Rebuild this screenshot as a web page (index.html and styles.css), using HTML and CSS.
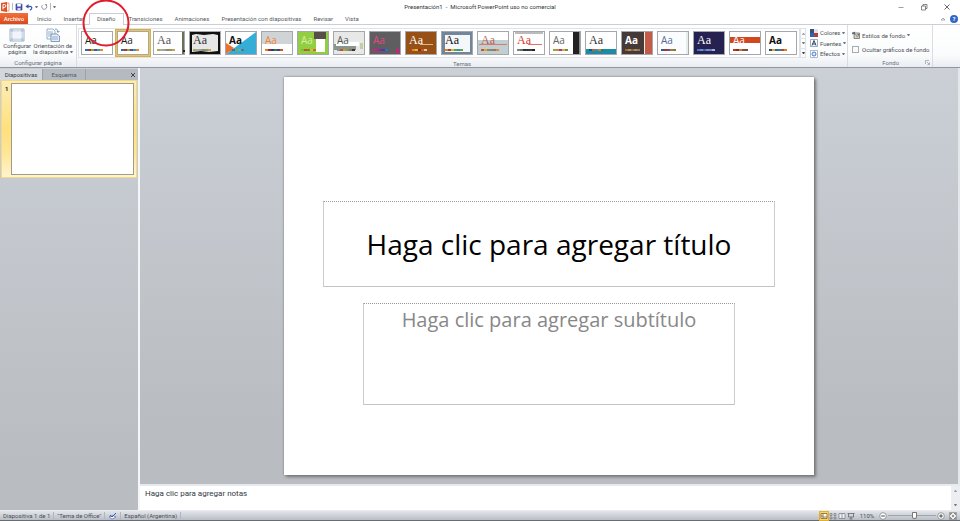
FILE: index.html
```html
<!DOCTYPE html>
<html lang="es">
<head>
<meta charset="utf-8">
<title>Presentación1 - Microsoft PowerPoint uso no comercial</title>
<link rel="stylesheet" href="styles.css">
</head>
<body>
<header class="titlebar">
  <div class="quick">
    <svg class="logo" viewBox="0 0 10 10" aria-hidden="true"><path d="M1 1l6-1v10l-6-1z" fill="#df5326"/><path d="M7 1h2v8H7" fill="#fff" stroke="#dc7550" stroke-width=".7"/><path d="M3 7.500V2.500h1.400a1.400 1.400 0 0 1 0 2.900H3" fill="none" stroke="#fff"/></svg>
    <i class="vline"></i>
    <button aria-label="Guardar"><svg viewBox="0 0 8 8"><path d="M1 1h5.500l.5.500V7H1z" fill="#4f55b4" stroke="#343c98" stroke-width=".7"/><path d="M2.200 1h3.600v2.500H2.200z" fill="#fff"/><path d="M2.500 5h3v2h-3z" fill="#d3d9f3"/></svg></button>
    <button aria-label="Deshacer"><svg viewBox="0 0 8 8"><path d="M1.500 3.500h3c3-.5 3 3 .3 3.500" fill="none" stroke="#3759b4" stroke-width="1.300"/><path d="M.5 3.600L3.500 1v4.500z" fill="#3759b4"/></svg></button>
    <span class="caret"></span>
    <button aria-label="Repetir"><svg viewBox="0 0 8 8"><path d="M2.500 2a2.500 2.500 0 1 0 3.500 0" fill="none" stroke="#949ba6"/><path d="M4.500 1H7v2.500z" fill="#949ba6"/></svg></button>
    <i class="vline"></i>
    <span class="caret"></span>
  </div>
  <h1>Presentación1&nbsp; -&nbsp; Microsoft PowerPoint uso no comercial</h1>
  <div class="window-buttons">
    <button aria-label="Minimizar"><svg viewBox="0 0 8 8"><path d="M1.500 4.500h5" stroke="#888" stroke-width=".8"/></svg></button>
    <button aria-label="Restaurar"><svg viewBox="0 0 8 8"><path d="M1.500 3h4v4h-4zM3 3V1.500h4v4H5.500" fill="none" stroke="#555" stroke-width=".7"/></svg></button>
    <button aria-label="Cerrar"><svg viewBox="0 0 8 8"><path d="M1.500 1.500l5 5m0-5l-5 5" stroke="#444" stroke-width=".8"/></svg></button>
  </div>
</header>
<nav class="tabs">
  <a class="file" href="#">Archivo</a>
  <a href="#">Inicio</a>
  <a href="#">Insertar</a>
  <a class="active" href="#">Diseño</a>
  <a href="#">Transiciones</a>
  <a href="#">Animaciones</a>
  <a href="#">Presentación con diapositivas</a>
  <a href="#">Revisar</a>
  <a href="#">Vista</a>
  <span class="help">
    <svg viewBox="0 0 6 6" aria-hidden="true"><path d="M1 4l2-2 2 2z" fill="#fff" stroke="#858c96" stroke-width=".7"/></svg>
    <button aria-label="Ayuda">?</button>
  </span>
</nav>
<section class="ribbon">
  <div class="group page-setup">
    <div class="body">
      <button class="big"><svg viewBox="0 0 16 16"><path d="M1 2h14v12H1z" fill="#fff" stroke="#8b9eb7" stroke-width=".8"/><path d="M1.500 4h13M1.500 12h13M3 2v12M13 2v12" stroke="#8aa6cb" stroke-width=".8"/><path d="M3.500 4.500h9v7h-9z" fill="#f1f4fa"/></svg><span>Configurar<br>página</span></button>
      <button class="big"><svg viewBox="0 0 16 16"><path d="M2 2h6l2 2v8H2z" fill="#fff" stroke="#7899c2" stroke-width=".8"/><path d="M3 5h5M3 7h5M3 9h5" stroke="#7899c2" stroke-width=".8"/><path d="M6 7h6l2.500 2v5.500H6z" fill="#e7edf6" stroke="#6485ae" stroke-width=".8"/><path d="M7 10h6M7 12h6" stroke="#819fc5" stroke-width=".8"/><path d="M10 2c2 0 3 1 3 3m-1-1l1 1.500L14.500 4" fill="none" stroke="#477bb5" stroke-width=".8"/></svg><span>Orientación de<br>la diapositiva <i class="caret"></i></span></button>
    </div>
    <h2>Configurar página</h2>
  </div>
  <div class="group themes">
    <div class="body">
      <div class="gallery" id="gallery"></div>
      <div class="scroller"><button aria-label="Fila anterior"><i class="caret up"></i></button><button aria-label="Fila siguiente"><i class="caret"></i></button><button aria-label="Más temas"><i class="caret more"></i></button></div>
      <div class="stack">
        <button><svg viewBox="0 0 8 8"><path d="M0 0h4v4H0z" fill="#394f7a"/><path d="M4 0h4v4H4z" fill="#dfe4ec"/><path d="M0 4h4v4H0z" fill="#2d64b2"/><path d="M4 4h4v4H4z" fill="#b43d38"/></svg>Colores <i class="caret"></i></button>
        <button><svg viewBox="0 0 8 8"><path d="M.5.5h7v7h-7z" fill="#fff" stroke="#6e87aa" stroke-width=".7"/><path d="M2 6.500L4 1.500l2 5M2.700 5h2.600" fill="none" stroke="#273f68"/></svg>Fuentes <i class="caret"></i></button>
        <button><svg viewBox="0 0 8 8"><path d="M.5.5h7v7h-7z" fill="#fff" stroke="#8c9db6" stroke-width=".7"/><circle cx="4" cy="4" r="2" fill="#dfeaff" stroke="#4a78c4"/></svg>Efectos <i class="caret"></i></button>
      </div>
    </div>
    <h2>Temas</h2>
  </div>
  <div class="group background">
    <div class="body">
      <button class="styles"><svg viewBox="0 0 8 8"><path d="M2 2h5.500v5.500H2z" fill="#cfd4d9" stroke="#555f6c" stroke-width=".7"/><path d="M.5 1l3 3M0 3l3-2" stroke="#40516b"/><path d="M3 3l4 2-2 2z" fill="#d1a33b"/><path d="M5 3h2v2z" fill="#4c73ae"/></svg>Estilos de fondo <i class="caret"></i></button>
      <label><input type="checkbox"> Ocultar gráficos de fondo</label>
    </div>
    <h2>Fondo</h2>
    <button class="launcher" aria-label="Formato del fondo"><svg viewBox="0 0 5 5"><path d="M.5 4V.5H4M2 2l2 2M4.500 2.500v2h-2" fill="none" stroke="#818790" stroke-width=".6"/></svg></button>
  </div>
</section>
<main class="workspace">
  <aside class="outline">
    <div class="pane-tabs"><button class="on">Diapositivas</button><button>Esquema</button><button class="close" aria-label="Cerrar"><svg viewBox="0 0 6 6"><path d="M1 1l4 4m0-4L1 5" stroke="#33373c" stroke-width=".9"/></svg></button></div>
    <div class="thumb"><b>1</b><div class="mini"></div></div>
  </aside>
  <section class="editor">
    <div class="stage">
      <article class="slide">
        <div class="ph title">Haga clic para agregar título</div>
        <div class="ph subtitle">Haga clic para agregar subtítulo</div>
      </article>
    </div>
    <div class="notes"><p>Haga clic para agregar notas</p><div class="notes-scroll"><i class="caret up"></i><i class="caret"></i></div></div>
  </section>
</main>
<footer class="status">
  <span>Diapositiva 1 de 1</span><span>"Tema de Office"</span>
  <span class="lang"><svg viewBox="0 0 9 8" aria-hidden="true"><path d="M1 5l4-1.500L8 5 4 7z" fill="#fff" stroke="#5b78bd" stroke-width=".8"/><path d="M2 3l2 2 4-4" fill="none" stroke="#3558b9"/></svg></span>
  <span>Español (Argentina)</span>
  <div class="views">
    <button class="on" aria-label="Normal"><svg viewBox="0 0 8 8"><path d="M1 1.500h6v5H1zM3 1.500v5M1 4h2M3 5h4" fill="#fff" stroke="#7c6630" stroke-width=".8"/></svg></button>
    <button aria-label="Clasificador"><svg viewBox="0 0 8 8"><path d="M1 1.500h2v2H1zM5 1.500h2v2H5zM1 5h2v2H1zM5 5h2v2H5z" fill="none" stroke="#737982" stroke-width=".7"/></svg></button>
    <button aria-label="Lectura"><svg viewBox="0 0 8 8"><path d="M1 1.500h6v5H1zM4 1.500v5" fill="#eee" stroke="#737982" stroke-width=".7"/></svg></button>
    <button aria-label="Presentación"><svg viewBox="0 0 8 8"><path d="M.5 1.500h7M1.500 1.500V5h5V1.500M4 5v2M2.500 7h3" fill="none" stroke="#62676f" stroke-width=".8"/></svg></button>
    <span class="zoom">110%</span>
    <button aria-label="Alejar"><svg viewBox="0 0 8 8"><circle cx="4" cy="4" r="3.300" fill="#fff" stroke="#757b83" stroke-width=".7"/><path d="M2.200 4h3.600" stroke="#444"/></svg></button>
    <input type="range" aria-label="Zoom" min="10" max="200" value="115">
    <button aria-label="Acercar"><svg viewBox="0 0 8 8"><circle cx="4" cy="4" r="3.300" fill="#fff" stroke="#757b83" stroke-width=".7"/><path d="M2.200 4h3.600M4 2.200v3.600" stroke="#444"/></svg></button>
    <button class="fit" aria-label="Ajustar"><svg viewBox="0 0 8 8"><path d="M.5.5h7v7h-7z" fill="#eee" stroke="#777" stroke-width=".6"/><path d="M1.500 3V1.500H3M5 1.500h1.500V3M6.500 5v1.500H5M3 6.500H1.500V5M3 4h2M4 3v2" fill="none" stroke="#555" stroke-width=".7"/></svg></button>
  </div>
</footer>
<svg class="marker" viewBox="0 0 48 48" aria-hidden="true"><circle cx="24" cy="24" r="22.500"/></svg>
<script src="themes.js"></script>
</body>
</html>
```
FILE: styles.css
```css
* { box-sizing: border-box; }
body {
  margin: 0;
  min-height: 100vh;
  display: flex;
  flex-direction: column;
  background: #fff;
  color: #4b5058;
  font: 6px/7px Roboto, "Open Sans", sans-serif;
}
button { font: inherit; color: inherit; background: none; border: 0; padding: 0; display: flex; align-items: center; }
h1, h2, p { margin: 0; font: inherit; }
svg { display: block; flex: none; }
.caret { display: inline-block; border: 1px solid transparent; border-top: 2px solid #777; border-bottom: 0; width: 3px; height: 2px; vertical-align: middle; }
.caret.up { border-top: 0; border-bottom: 2px solid #9aa0a8; }
.caret.more { border-top-color: #444; }
.vline { width: 1px; height: 7px; background: #b5b8bd; }

.titlebar { display: grid; grid-template-columns: 1fr auto 1fr; height: 13px; align-items: center; color: #333; }
.quick { display: flex; align-items: center; gap: 2px; }
.quick svg { width: 8px; height: 8px; }
.quick .logo { width: 10px; height: 10px; }
.window-buttons { display: flex; justify-content: flex-end; gap: 15px; padding-right: 9px; }
.window-buttons svg { width: 8px; height: 8px; }

.tabs { display: flex; height: 12px; gap: 12px; align-items: stretch; border-bottom: 1px solid #cbcfd5; }
.tabs a { color: #555a62; text-decoration: none; line-height: 12px; }
.tabs .file { width: 28px; text-align: center; background: linear-gradient(#f2703c, #d9481c); color: #fff; margin-right: -3px; font-weight: 500; }
.tabs .active { border: 1px solid #cbcfd5; border-bottom: 0; background: #fff; height: 12px; padding: 0 7px; line-height: 10px; margin: 0 -7px; }
.help { margin-left: auto; display: flex; align-items: center; gap: 4px; padding-right: 2px; }
.help svg { width: 6px; height: 6px; }
.help button { width: 8px; height: 8px; border-radius: 50%; background: #3167c5; color: #fff; justify-content: center; font-weight: 700; }

.ribbon { display: flex; height: 43px; background: linear-gradient(#fff, #fbfcfd 70%, #e9edf2); border-bottom: 1px solid #93979d; }
.group { display: grid; grid-template-rows: 1fr 8px; border-right: 1px solid #d9dce1; position: relative; }
.group h2 { text-align: center; color: #686f79; }
.page-setup { width: 77px; }
.page-setup .body { display: flex; justify-content: center; gap: 2px; }
.big { flex-direction: column; text-align: center; line-height: 6px; padding-top: 2px; }
.big svg { width: 16px; height: 16px; }
.themes { flex: 1; }
.themes .body { display: flex; padding: 3px 1px 2px 1px; gap: 4px; }
.gallery { flex: 1; display: grid; grid-template-columns: repeat(20, 1fr); border: 1px solid #dfe2e7; background: #fff; align-items: center; }
.theme { display: block; height: 28px; padding: 2px; }
.theme svg { width: 100%; height: 24px; }
.theme.selected { background: #e9c55c; outline: 1px solid #d5b04a; outline-offset: -1px; }
.scroller { display: grid; grid-template-rows: repeat(3, 1fr); width: 6px; margin-left: -4px; border: 1px solid #dfe2e7; }
.scroller button { justify-content: center; }
.scroller button + button { border-top: 1px solid #dfe2e7; }
.stack { display: flex; flex-direction: column; justify-content: space-between; width: 36px; }
.stack button { gap: 2px; height: 9px; }
.stack svg, .styles svg { width: 8px; height: 8px; }
.background { width: 85px; margin-right: 27px; }
.background .body { display: flex; flex-direction: column; gap: 7px; padding: 6px 4px; }
.styles { gap: 2px; }
.background label { display: flex; align-items: center; gap: 3px; white-space: nowrap; }
.background input { appearance: none; width: 7px; height: 7px; margin: 0; border: 1px solid #a6abb3; background: #f9fafb; }
.launcher { position: absolute; right: 2px; bottom: 2px; }
.launcher svg { width: 5px; height: 5px; }

.workspace { flex: 1; display: flex; min-height: 0; background: #b9bdc3; }
.outline { width: 138px; background: linear-gradient(#cbd0d6, #b9bdc2 90%); padding-top: 1px; }
.pane-tabs { display: flex; height: 11px; background: #b5bac1; }
.pane-tabs button { width: 43px; justify-content: center; color: #555c65; border-right: 1px solid #9da2aa; }
.pane-tabs .on { background: #d4d8dd; color: #353b43; }
.pane-tabs .close { width: 10px; border: 0; margin-left: auto; }
.close svg { width: 6px; height: 6px; }
.thumb { display: flex; height: 98px; margin: 0 1px; padding: 2px 2px 2px 3px; gap: 3px; border: 1px solid #f3d985; background: linear-gradient(#fcedb7, #ffe07c 50%, #ffe596 75%, #fff5cf); color: #222; }
.thumb b { width: 3px; padding-top: 2px; }
.mini { flex: 1; background: #fff; border: 1px solid #a29b87; }
.editor { flex: 1; display: flex; flex-direction: column; border-left: 2px solid #f4f6f8; min-width: 0; }
.stage { flex: 1; min-height: 0; display: flex; justify-content: center; padding: 9px 0; border-right: 2px solid #e5e8eb; background: linear-gradient(#cbd0d6, #b9bdc2 85%); }
.slide { height: 100%; aspect-ratio: 4 / 3; background: #fff; box-shadow: 0 0 2px #777, 2px 2px 3px #777; display: grid; grid-template-rows: 124fr 86fr 16fr 102fr 70fr; justify-items: center; }
.ph { border: 1px solid #ccc; border-top: 1px dotted #999; border-bottom-color: #c4c4c4; display: flex; justify-content: center; font-family: "Open Sans", "Noto Sans", sans-serif; }
.title { grid-row: 2; width: 85%; align-items: center; color: #000; font-size: 28px; line-height: 36px; }
.subtitle { grid-row: 4; width: 70%; color: #888; font-size: 20px; line-height: 32px; }
.notes { height: 26px; background: #fff; border-top: 2px solid #e6e9ed; display: flex; justify-content: space-between; color: #33393f; font-size: 8px; line-height: 10px; }
.notes p { padding: 3px 5px; }
.notes-scroll { width: 9px; background: #eceef1; display: flex; flex-direction: column; align-items: center; justify-content: space-between; padding: 4px 0; }

.status { height: 11px; display: flex; align-items: center; background: linear-gradient(#e2e5e9, #b9bec5); border-bottom: 1px solid #686d74; border-top: 1px solid #e9ebee; }
.status > span { padding: 0 3px; border-right: 1px solid #b1b6bd; white-space: nowrap; }
.status > .lang svg { width: 9px; height: 8px; }
.views { margin-left: auto; display: flex; align-items: center; gap: 1px; padding-right: 3px; }
.views svg { width: 8px; height: 8px; }
.views .on { background: #ffd362; outline: 1px solid #e5ae2e; }
.views .fit { margin-left: 3px; }
.zoom { width: 22px; text-align: center; }
.views input { appearance: none; width: 48px; height: 7px; margin: 0; background: linear-gradient(#9fa4ab, #9fa4ab) center / 100% 1px no-repeat; }
.views input::-webkit-slider-thumb { appearance: none; width: 5px; height: 7px; border: 1px solid #777; border-radius: 1px 1px 3px 3px; background: #fff; }
.marker { position: absolute; left: 82px; top: -1px; width: 48px; height: 48px; pointer-events: none; }
.marker circle { fill: none; stroke: #e01b2b; stroke-width: 2; }
```
FILE: themes.js
```js
// Each theme: name, background, letter colour, font, swatches, decoration drawn under the letters.
const sans = "Open Sans", serif = "Liberation Serif";
const office = ["#3568b2", "#b8322c", "#88a83b", "#64478f", "#349bb5", "#ed852b"];
const muted = ["#a6a75a", "#a9b18a", "#8fa3a4", "#99846c", "#8e9a5c", "#bfa451"];
const r = (x, y, w, h, f) => `<rect x="${x}" y="${y}" width="${w}" height="${h}" fill="${f}"/>`;
const themes = [
  ["Office", "#fff", "#222", sans, office, ""],
  ["Tema de Office", "#fff", "#222", sans, office, ""],
  ["Adyacencia", "#fff", "#555", serif, muted, r(29, 1, 2, 22, "#6b705a") + r(30, 19, 2, 2, "#222")],
  ["Boticario", "#111", "#333", serif, muted, `<path d="M3 4l4-1 8 1 9-1 5 1v16l-9 1-8-1-9 1z" fill="#e7e7e7"/>`],
  ["Ángulos", "#fff", "#111", sans, ["#f26a25", "#38779b", "#88a83b", "#57b6bb", "#69736c"], `<path d="M1 23L31 1v22z" fill="#35add7"/><path d="M1 12l8 5-8 6z" fill="#ee702d"/>`],
  ["Aspecto", "#fff", "#f08331", sans, ["#f0791d", "#a72722", "#253a79", "#267c48", "#5a3378", "#bc5f22"], r(1, 1, 30, 12, "#d1d4d7")],
  ["Austin", "#92ce42", "#d5f0a4", sans, ["#87b536", "#df4825", "#73883c", "#edb62b", "#c96b2d"], r(17, 1, 12, 7, "#594f49") + r(19, 8, 9, 13, "#fff")],
  ["Mirador", "#e8e9e6", "#4e5657", sans, ["#889494", "#b75630", "#bf993a", "#7aa05c", "#847465", "#333"], r(1, 13, 22, 6, "#89958f") + r(3, 11, 23, 4, "#fff") + r(27, 12, 3, 6, "#c4cda4")],
  ["Civil", "#5e5e60", "#e5457f", sans, ["#e01682", "#bd1f89", "#8428a0", "#4d37b5", "#2a70c5"], r(27, 18, 3, 4, "#e01682")],
  ["Clarity", "#975016", "#fff", serif, ["#b04817", "#de8b24", "#e4b53e", "#8a2f1d", "#ca5a29", "#e6c69a"], r(15, 13, 13, 1, "#d8b98f")],
  ["Compuesto", "#71869b", "#111", serif, ["#e4802a", "#b43d25", "#e0b629", "#55a354", "#329899", "#68a14a"], r(4, 4, 25, 17, "#f5f8fa")],
  ["Concurrencia", "#c1cfd2", "#be6153", serif, ["#ca5532", "#dfa33b", "#8e8f4c", "#75898e", "#aa7444", "#dc8a50"], r(1, 1, 30, 8, "#fff") + r(2, 13, 28, 1, "#d57b6c")],
  ["Ejecutivo", "#fff", "#cf3b2b", serif, ["#778471", "#52786e", "#333", "#253a46", "#35423a", "#222"], r(2, 1, 28, 2, "#bbb") + r(15, 13, 14, 1, "#df7464")],
  ["Esencial", "#fff", "#666", sans, ["#8eab3d", "#db852d", "#a63a84", "#e4a537", "#6a9640"], r(24, 1, 7, 22, "#222") + r(30, 1, 1, 22, "#888")],
  ["Flujo", "#fff", "#333", serif, ["#175a82", "#dd572c", "#2d93aa", "#e4782c", "#287e7d"], r(1, 18, 30, 5, "#1c8ca5")],
  ["Forma", "#463a38", "#fff", sans, ["#a96034", "#ba8e46", "#80694a", "#a88b66", "#9c7550"], r(24, 1, 7, 22, "#c45b48") + r(23, 1, 1, 22, "#eee")],
  ["Fundición", "#fafcfd", "#536b9b", sans, ["#305992", "#a23829", "#6a4b8d", "#b9772d", "#738237"], r(29, 1, 2, 22, "#e7ecec")],
  ["Horizonte", "#252252", "#fff", serif, ["#4a73c0", "#678fd0", "#4b629f", "#6a91d2", "#7482ac", "#9fb0d5"], ""],
  ["Integral", "#fff", "#fff", sans, ["#b33923", "#9a251e", "#c87632", "#8a4e36", "#874640"], r(1, 6, 30, 6, "#cf481f")],
  ["Intermedio", "#fff", "#111", sans, ["#3a4350", "#dfa42a", "#3664a8", "#2a82a0", "#bd462e", "#dd7c32"], ""]
];
document.getElementById("gallery").innerHTML = themes.map(([name, bg, ink, font, dots, extra], i) => {
  const swatches = dots.map((c, n) => r(4 + n * 3, 18, 3, 2, c)).join("");
  const weight = i === 19 || i === 4 || i === 15 ? 700 : 400;
  const size = font === serif ? 12 : 10;
  return `<button class="theme${i === 1 ? " selected" : ""}" aria-label="${name}"><svg viewBox="0 0 32 24">
    <rect x=".5" y=".5" width="31" height="23" fill="${bg}" stroke="#a4a8ad"/>${extra}
    <text x="4" y="13" font-family="${font}" font-size="${size}" font-weight="${weight}" fill="${ink}">Aa</text>${swatches}</svg></button>`;
}).join("");
```
